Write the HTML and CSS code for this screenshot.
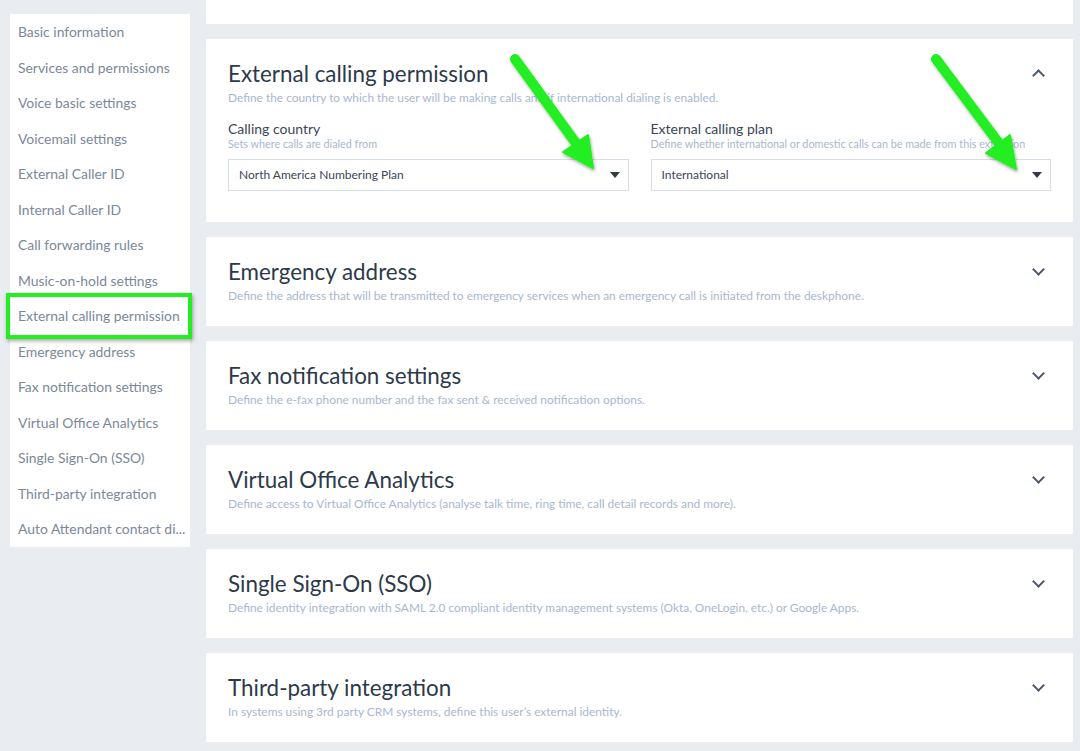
FILE: index.html
```html
<!DOCTYPE html>
<html lang="en">

<head>
  <meta charset="UTF-8">
  <title>User settings</title>
  <link rel="stylesheet" href="styles.css">
</head>

<body>
  <ul class="sidebar">
    <li>Basic information</li>
    <li>Services and permissions</li>
    <li>Voice basic settings</li>
    <li>Voicemail settings</li>
    <li>External Caller ID</li>
    <li>Internal Caller ID</li>
    <li>Call forwarding rules</li>
    <li>Music-on-hold settings</li>
    <li class="active">External calling permission</li>
    <li>Emergency address</li>
    <li>Fax notification settings</li>
    <li>Virtual Office Analytics</li>
    <li>Single Sign-On (SSO)</li>
    <li>Third-party integration</li>
    <li>Auto Attendant contact di...</li>
  </ul>

  <div class="main">
    <div class="card partial"></div>

    <div class="card open">
      <div class="card-head">
        <div>
          <h2>External calling permission</h2>
          <p class="desc">Define the country to which the user will be making calls and if international dialing is enabled.</p>
        </div>
        <span class="chevron up"></span>
      </div>
      <div class="fields">
        <div class="field">
          <div class="label">Calling country</div>
          <div class="hint">Sets where calls are dialed from</div>
          <div class="select">North America Numbering Plan</div>
        </div>
        <div class="field">
          <div class="label">External calling plan</div>
          <div class="hint">Define whether international or domestic calls can be made from this extension</div>
          <div class="select">International</div>
        </div>
      </div>
    </div>

    <div class="card">
      <div class="card-head">
        <div>
          <h2>Emergency address</h2>
          <p class="desc">Define the address that will be transmitted to emergency services when an emergency call is initiated from the deskphone.</p>
        </div>
        <span class="chevron"></span>
      </div>
    </div>

    <div class="card">
      <div class="card-head">
        <div>
          <h2>Fax notification settings</h2>
          <p class="desc">Define the e-fax phone number and the fax sent &amp; received notification options.</p>
        </div>
        <span class="chevron"></span>
      </div>
    </div>

    <div class="card">
      <div class="card-head">
        <div>
          <h2>Virtual Office Analytics</h2>
          <p class="desc">Define access to Virtual Office Analytics (analyse talk time, ring time, call detail records and more).</p>
        </div>
        <span class="chevron"></span>
      </div>
    </div>

    <div class="card">
      <div class="card-head">
        <div>
          <h2>Single Sign-On (SSO)</h2>
          <p class="desc">Define identity integration with SAML 2.0 compliant identity management systems (Okta, OneLogin, etc.) or Google Apps.</p>
        </div>
        <span class="chevron"></span>
      </div>
    </div>

    <div class="card">
      <div class="card-head">
        <div>
          <h2>Third-party integration</h2>
          <p class="desc">In systems using 3rd party CRM systems, define this user’s external identity.</p>
        </div>
        <span class="chevron"></span>
      </div>
    </div>
  </div>

  <!-- annotation arrows drawn over the screenshot -->
  <svg class="arrows" width="1080" height="751" viewBox="0 0 1080 751">
    <defs>
      <filter id="shadow" x="-20%" y="-20%" width="140%" height="140%">
        <feDropShadow dx="1" dy="2" stdDeviation="1.5" flood-color="#000" flood-opacity="0.35"/>
      </filter>
    </defs>
    <g fill="#22ee22" stroke="#22ee22" filter="url(#shadow)">
      <line x1="515" y1="59" x2="578" y2="146" stroke-width="10" stroke-linecap="round"/>
      <polygon points="593,168 563,152 588,135" stroke-width="2" stroke-linejoin="round"/>
      <line x1="936" y1="59" x2="1001" y2="146" stroke-width="10" stroke-linecap="round"/>
      <polygon points="1016,169 986,153 1010,135" stroke-width="2" stroke-linejoin="round"/>
    </g>
  </svg>
</body>
</html>
```

FILE: styles.css
```css
html, body {
  margin: 0;
  padding: 0;
}

body {
  background-color: #e9edf1;
  font-family: Lato, "Open Sans", sans-serif;
  display: flex;
  align-items: flex-start;
  gap: 16px;
  padding: 0 7px 0 10px;
  height: 751px;
  overflow: hidden;
  position: relative;
}

.sidebar {
  list-style: none;
  margin: 14px 0 0 0;
  padding: 0;
  width: 180px;
  flex-shrink: 0;
  background-color: #fff;
}

.sidebar li {
  position: relative;
  height: 35.5px;
  line-height: 35.5px;
  padding-left: 8px;
  font-size: 13.9px;
  color: #7b8899;
  white-space: nowrap;
  overflow: hidden;
}

.sidebar li.active {
  overflow: visible;
}

.sidebar li.active::after {
  content: "";
  position: absolute;
  top: -5px;
  bottom: -5px;
  left: -4px;
  right: -2px;
  border: 4px solid #22ee22;
  box-shadow: 1px 2px 4px rgba(0, 0, 0, 0.35);
}

.main {
  flex: 1;
  display: flex;
  flex-direction: column;
  gap: 15px;
}

.card {
  background-color: #fff;
  padding: 22px 22px 23px 22px;
}

.card.partial {
  height: 24px;
  padding: 0;
}

.card.open {
  padding-bottom: 31px;
}

.card-head {
  display: flex;
  justify-content: space-between;
  align-items: flex-start;
}

h2 {
  margin: 0;
  font-size: 22.4px;
  line-height: 26px;
  font-weight: 400;
  color: #2d3a4a;
}

.desc {
  margin: 4px 0 0 0;
  font-size: 11.9px;
  line-height: 14px;
  color: #a8b7cf;
}

.chevron {
  width: 7px;
  height: 7px;
  border-right: 2px solid #4d5a6b;
  border-bottom: 2px solid #4d5a6b;
  transform: rotate(45deg);
  margin: 6px 8px 0 0;
}

.chevron.up {
  transform: rotate(-135deg);
  margin-top: 10px;
}

.fields {
  display: grid;
  grid-template-columns: 1fr 1fr;
  gap: 22px;
  margin-top: 15px;
}

.label {
  font-size: 14px;
  line-height: 17px;
  color: #3b4656;
}

.hint {
  font-size: 10.8px;
  line-height: 13px;
  color: #a8b7cf;
  white-space: nowrap;
}

.select {
  position: relative;
  margin-top: 9px;
  height: 30px;
  line-height: 30px;
  border: 1px solid #d6dde7;
  padding-left: 10px;
  font-size: 12px;
  color: #3b4656;
}

.select::after {
  content: "";
  position: absolute;
  right: 8px;
  top: 12px;
  border-left: 5px solid transparent;
  border-right: 5px solid transparent;
  border-top: 6px solid #333a44;
}

.arrows {
  position: absolute;
  top: 0;
  left: 0;
  pointer-events: none;
}
```
